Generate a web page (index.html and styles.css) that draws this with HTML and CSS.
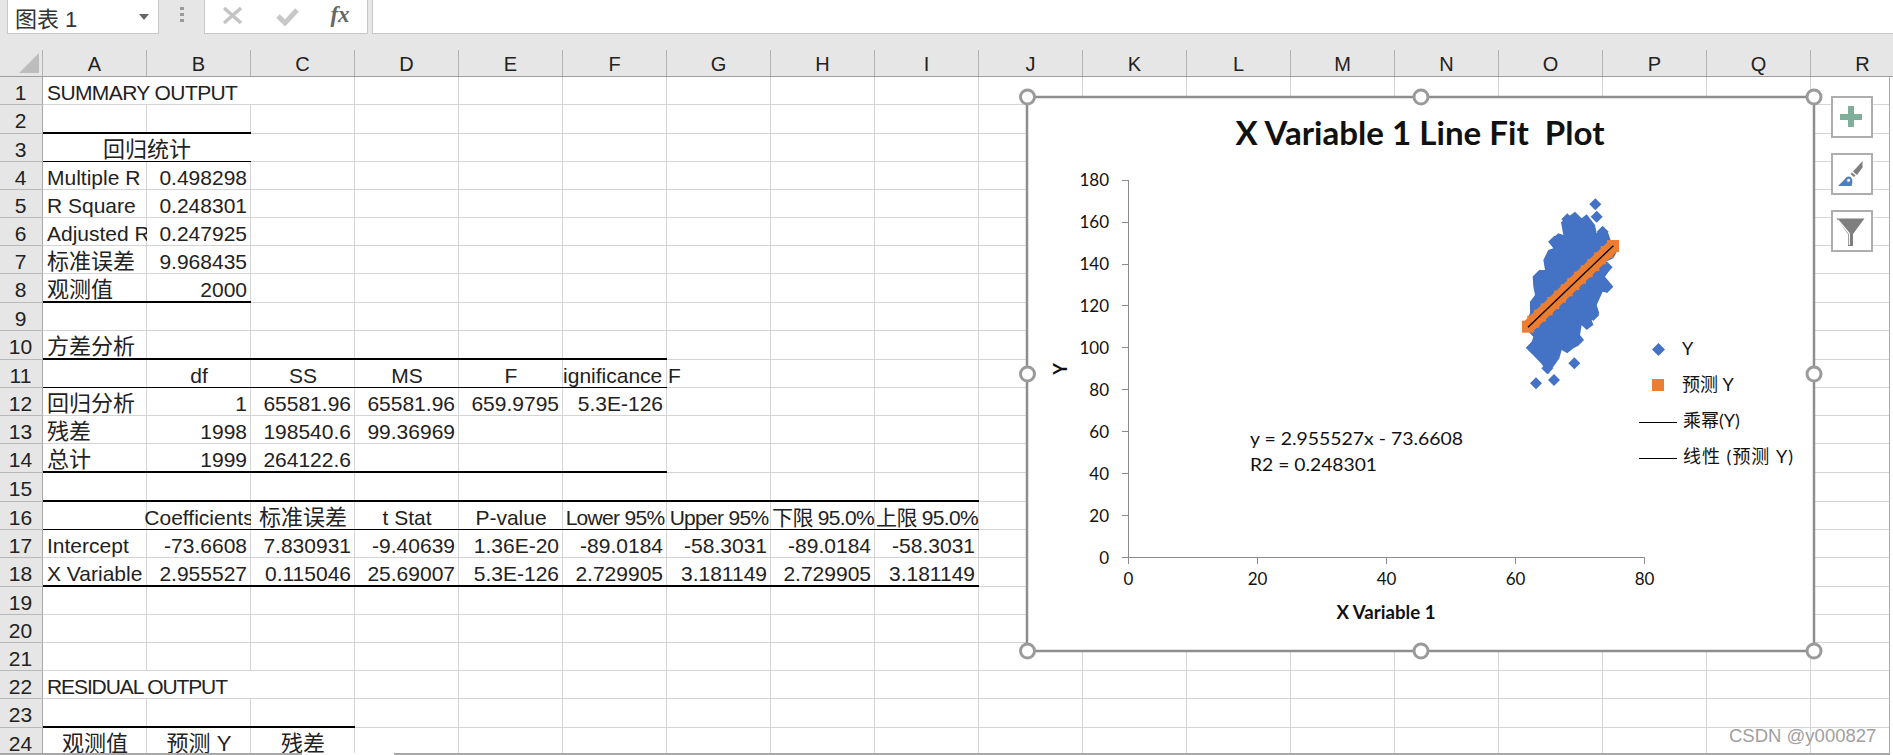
FILE: index.html

```html
<!DOCTYPE html>
<html lang="zh-CN">
<head>
  <meta charset="UTF-8" />
  <title>回归分析</title>
  <link rel="stylesheet" href="styles.css">
</head>
<body>
  <div class="toolbar">
    <div class="namebox"><span>图表 1</span><i class="caret"></i></div>
    <div class="dots"><i></i><i></i><i></i></div>
    <div class="fxbox">
      <svg class="tool" viewBox="0 0 54 30"><path d="M19 8 36 23M36 8 19 23" /></svg>
      <svg class="tool" viewBox="0 0 54 30"><path class="tick" d="M19 16 26 23 38 10" /></svg>
      <span class="fx">fx</span>
    </div>
    <div class="formula"></div>
  </div>

  <div class="colhead">
    <div class="corner"><i></i></div>
    <div>A</div><div>B</div><div>C</div><div>D</div><div>E</div><div>F</div><div>G</div><div>H</div><div>I</div>
    <div>J</div><div>K</div><div>L</div><div>M</div><div>N</div><div>O</div><div>P</div><div>Q</div><div>R</div>
  </div>

  <div class="grid">
    <div class="row"><b>1</b><div class="s2 fill caps">SUMMARY OUTPUT</div></div>
    <div class="row tall"><b>2</b><div class="s2 t"></div></div>
    <div class="row"><b>3</b><div class="s2 fill ctr u zh">回归统计</div></div>
    <div class="row"><b>4</b><div>Multiple R</div><div class="num">0.498298</div></div>
    <div class="row"><b>5</b><div>R Square</div><div class="num">0.248301</div></div>
    <div class="row"><b>6</b><div class="clip">Adjusted R</div><div class="num">0.247925</div></div>
    <div class="row"><b>7</b><div class="zh">标准误差</div><div class="num">9.968435</div></div>
    <div class="row tall"><b>8</b><div class="t zh">观测值</div><div class="num t">2000</div></div>
    <div class="row"><b>9</b></div>
    <div class="row tall"><b>10</b><div class="t zh">方差分析</div><div class="s5 t"></div></div>
    <div class="row"><b>11</b><div class="u"></div><div class="ctr u">df</div><div class="ctr u">SS</div><div class="ctr u">MS</div><div class="ctr u">F</div><div class="ctr u cut-left">Significance F</div></div>
    <div class="row"><b>12</b><div class="zh">回归分析</div><div class="num">1</div><div class="num">65581.96</div><div class="num">65581.96</div><div class="num">659.9795</div><div class="num">5.3E-126</div></div>
    <div class="row"><b>13</b><div class="zh">残差</div><div class="num">1998</div><div class="num">198540.6</div><div class="num">99.36969</div></div>
    <div class="row tall"><b>14</b><div class="t zh">总计</div><div class="num t">1999</div><div class="num t">264122.6</div><div class="s3 t"></div></div>
    <div class="row tall"><b>15</b><div class="s9 t"></div></div>
    <div class="row"><b>16</b><div class="u"></div><div class="ctr u cut-right">Coefficients</div><div class="ctr u zh">标准误差</div><div class="ctr u">t Stat</div><div class="ctr u">P-value</div><div class="ctr u pct">Lower 95%</div><div class="ctr u pct">Upper 95%</div><div class="ctr u pct">下限 95.0%</div><div class="ctr u pct">上限 95.0%</div></div>
    <div class="row"><b>17</b><div>Intercept</div><div class="num">-73.6608</div><div class="num">7.830931</div><div class="num">-9.40639</div><div class="num">1.36E-20</div><div class="num">-89.0184</div><div class="num">-58.3031</div><div class="num">-89.0184</div><div class="num">-58.3031</div></div>
    <div class="row tall"><b>18</b><div class="t clip">X Variable</div><div class="num t">2.955527</div><div class="num t">0.115046</div><div class="num t">25.69007</div><div class="num t">5.3E-126</div><div class="num t">2.729905</div><div class="num t">3.181149</div><div class="num t">2.729905</div><div class="num t">3.181149</div></div>
    <div class="row"><b>19</b></div>
    <div class="row"><b>20</b></div>
    <div class="row"><b>21</b></div>
    <div class="row"><b>22</b><div class="s2 fill caps wide">RESIDUAL OUTPUT</div></div>
    <div class="row tall"><b>23</b><div class="s3 t"></div></div>
    <div class="row last"><b>24</b><div class="ctr zh">观测值</div><div class="ctr zh">预测 Y</div><div class="ctr zh">残差</div></div>
  </div>
  <div class="sheetend"><i></i><i></i></div>

  <!-- viewBox uses page coordinates so the numbers read straight off the screenshot -->
  <svg class="chart" viewBox="1010 80 820 590">
    <defs>
      <path id="d" d="M0-18 18 0 0 18-18 0Z" />
      <path id="s" d="M-18-18H18V18H-18Z" />
      <circle id="handle" r="7" />
    </defs>
    <rect class="frame" x="1027" y="97" width="787" height="554" />

    <text class="title" x="1420" y="145" textLength="369" lengthAdjust="spacingAndGlyphs">X Variable 1 Line Fit  Plot</text>

    <path class="axis" d="M1128.5 180V557.5H1644.5M1122 180.5H1128.5M1122 222.5H1128.5M1122 264.5H1128.5M1122 305.5H1128.5M1122 347.5H1128.5M1122 389.5H1128.5M1122 431.5H1128.5M1122 473.5H1128.5M1122 515.5H1128.5M1122 557.5H1128.5M1128.5 557.5V564M1257.5 557.5V564M1386.5 557.5V564M1515.5 557.5V564M1644.5 557.5V564" />
    <g class="tick-y">
      <text x="1109" y="186">180</text>
      <text x="1109" y="228">160</text>
      <text x="1109" y="270">140</text>
      <text x="1109" y="312">120</text>
      <text x="1109" y="354">100</text>
      <text x="1109" y="396">80</text>
      <text x="1109" y="438">60</text>
      <text x="1109" y="480">40</text>
      <text x="1109" y="522">20</text>
      <text x="1109" y="564">0</text>
    </g>
    <g class="tick-x">
      <text x="1128.5" y="585">0</text>
      <text x="1257.5" y="585">20</text>
      <text x="1386.5" y="585">40</text>
      <text x="1515.5" y="585">60</text>
      <text x="1644.5" y="585">80</text>
    </g>
    <text class="axis-title" x="1386" y="619" textLength="99" lengthAdjust="spacingAndGlyphs">X Variable 1</text>
    <text class="axis-title" transform="translate(1067 369) rotate(-90)">Y</text>

    <!-- scatter, in 3x units measured off a zoomed crop -->
    <g transform="translate(1480 180) scale(.33333)">
      <g class="blue">
        <path d="M285 95 305 115 320 103 345 135 350 160 367 140 385 160 395 190 415 207 400 235 378 245 395 262 375 290 400 320 382 338 368 335 350 375 358 400 335 420 340 435 322 448 305 435 300 465 312 480 295 497 280 505 262 520 245 510 238 535 205 582 185 552 138 503 155 485 160 470 130 440 150 400 150 365 165 345 160 320 158 290 178 270 195 270 190 240 205 210 220 205 205 185 235 160 250 165 243 127Z" />
        <use href="#d" x="346" y="73" />
        <use href="#d" x="350" y="110" />
        <use href="#d" x="283" y="550" />
        <use href="#d" x="222" y="600" />
        <use href="#d" x="168" y="610" />
        <use href="#d" x="202" y="565" />
        <use href="#d" x="380" y="320" />
        <use href="#d" x="368" y="155" />
        <use href="#d" x="320" y="432" />
        <use href="#d" x="290" y="480" />
        <use href="#d" x="156" y="503" />
        <use href="#d" x="262" y="118" />
        <use href="#d" x="223" y="185" />
        <use href="#d" x="176" y="290" />
        <use href="#d" x="380" y="262" />
        <use href="#d" x="340" y="405" />
      </g>
      <g class="orange">
        <path d="M144 441 399 198" />
        <use href="#s" x="160" y="425" /><use href="#s" x="180" y="407" /><use href="#s" x="200" y="388" />
        <use href="#s" x="220" y="369" /><use href="#s" x="240" y="350" /><use href="#s" x="260" y="331" />
        <use href="#s" x="280" y="312" /><use href="#s" x="300" y="293" /><use href="#s" x="320" y="274" />
        <use href="#s" x="340" y="255" /><use href="#s" x="360" y="235" /><use href="#s" x="380" y="216" />
        <rect x="126" y="422" width="36" height="36" />
        <rect x="381" y="180" width="36" height="36" />
      </g>
      <path class="fit" d="M144 442 400 197" />
    </g>

    <text class="note" x="1250" y="445" textLength="213" lengthAdjust="spacingAndGlyphs">y = 2.955527x - 73.6608</text>
    <text class="note" x="1250" y="471" textLength="127" lengthAdjust="spacingAndGlyphs">R2 = 0.248301</text>

    <path class="key-blue" d="M1658.5 343 1665 349.5 1658.5 356 1652 349.5Z" />
    <rect class="key-orange" x="1652" y="379" width="12" height="12" />
    <path class="key-line" d="M1639 422.5H1677M1639 458.5H1677" />
    <text class="legend" x="1682" y="355">Y</text>
    <text class="legend" x="1682" y="391">预测 Y</text>
    <text class="legend" x="1683" y="427">乘幂(Y)</text>
    <text class="legend" x="1683" y="463" textLength="110" lengthAdjust="spacing">线性 (预测 Y)</text>

    <g class="handles">
      <use href="#handle" x="1027.5" y="97" />
      <use href="#handle" x="1421" y="97" />
      <use href="#handle" x="1814" y="97" />
      <use href="#handle" x="1027.5" y="374" />
      <use href="#handle" x="1814" y="374" />
      <use href="#handle" x="1027.5" y="651" />
      <use href="#handle" x="1421" y="651" />
      <use href="#handle" x="1814" y="651" />
    </g>
  </svg>

  <div class="chart-tools">
    <div class="tool-btn"><svg viewBox="2 2 38 38"><path class="plus" d="M17 10H23V18H31V24H23V31H17V24H9V18H17Z" /></svg></div>
    <div class="tool-btn"><svg viewBox="2 2 38 38">
      <path class="grey" d="M31.5 8V14.5L26 22 22 18.5Z" />
      <path class="grey" d="M19.5 21 21 19.5 24.5 22.5 23 24Z" />
      <path class="brush" d="M7 33 13.5 26.5C15 24 18 22.5 20 24.5 22 26.5 21.5 30.5 20.5 33Z" />
      <path class="swoosh" d="M15.5 27C16 25.5 18.5 25 19.5 26.5 20 28 18 30 16.5 29 15.8 28.6 15.5 27.8 15.5 27Z" />
    </svg></div>
    <div class="tool-btn"><svg viewBox="2 2 38 38">
      <path class="grey" d="M5.5 8.5H33.5L22 24V36H17V24Z" />
      <path class="funnel-edge" d="M7 10 18.3 23.5V35" />
    </svg></div>
  </div>

  <div class="watermark">CSDN @y000827</div>
</body>
</html>
```

FILE: styles.css

```css
* { box-sizing: border-box; }
html, body { margin: 0; height: 755px; overflow: hidden; }
body { position: relative; background: #fff; color: #222; font-family: "Liberation Sans", "Noto Sans CJK SC", sans-serif; font-size: 21px; }

/* formula bar */
.toolbar { display: flex; height: 50px; background: #e6e6e6; padding-left: 7px; align-items: flex-start; }
.namebox { display: flex; justify-content: space-between; align-items: center; width: 152px; height: 34px; background: #fff; border: 1px solid #c8c8c8; border-top: 0; padding: 0 9px 0 7px; font-size: 22px; color: #333; }
.caret { width: 0; height: 0; border: 5px solid transparent; border-top: 6px solid #666; border-bottom: 0; }
.dots { display: flex; flex-direction: column; gap: 3px; width: 45px; align-items: center; padding-top: 7px; }
.dots i { width: 4px; height: 3px; background: #9a9a9a; }
.fxbox { display: flex; width: 164px; height: 34px; background: #fff; border: 1px solid #c8c8c8; border-top: 0; }
.tool { width: 54px; height: 30px; fill: none; stroke: #c4c4c4; stroke-width: 3.5; }
.tool .tick { stroke: #c8c8c8; stroke-width: 5; }
.fx { width: 54px; text-align: center; font: italic bold 23px/30px "Liberation Serif", serif; color: #666; }
.formula { flex: 1; height: 34px; margin-left: 4px; background: #fff; border: 1px solid #c8c8c8; border-top: 0; border-right: 0; }

/* column letters */
.colhead { display: grid; grid-template-columns: 43px repeat(18, 104px); height: 27px; background: #e6e6e6; border-bottom: 1px solid #9e9e9e; font-size: 20px; line-height: 28px; text-align: center; color: #222; overflow: hidden; }
.colhead div { border-right: 1px solid #b4b4b4; }
.corner { position: relative; }
.corner i { position: absolute; left: 19px; top: 3px; width: 20px; height: 20px; background: #bdbdbd; clip-path: polygon(100% 0, 100% 100%, 0 100%); }

/* sheet */
.grid { width: 1890px; overflow: hidden; border-right: 1px solid #aaa; }
.row { display: grid; grid-template-columns: 43px repeat(18, 104px); grid-template-rows: minmax(0, 1fr); height: 28px; line-height: 31px; white-space: nowrap; background: linear-gradient(90deg, #d4d4d4 1px, transparent 1px) 42px 0 / 104px 100%; border-bottom: 1px solid #d4d4d4; }
.row.tall { height: 29px; }
.row.last { height: 25px; border-bottom: 0; }
.row b { font-weight: normal; text-align: center; background: #e6e6e6; border-right: 1px solid #a8a8a8; box-shadow: 0 1px 0 #b8b8b8; padding-right: 1px; }
.row div { padding: 0 4px; min-width: 0; }
.zh { font-size: 22px; }
.caps { letter-spacing: -.6px; }
.caps.wide { letter-spacing: -1.1px; }
.num { text-align: right; }
.ctr { display: flex; justify-content: center; }
.pct { letter-spacing: -.7px; }
.clip { clip-path: inset(0 0 -6px 0); }
.cut-right { clip-path: inset(0 0 -6px -60px); }
.cut-left { clip-path: inset(0 -60px -6px 0); }
.fill { background: #fff; }
.s2 { grid-column: span 2; }
.s3 { grid-column: span 3; }
.s5 { grid-column: span 5; }
.s9 { grid-column: span 9; }
.u { box-shadow: 0 1px 0 #000; }
.t { box-shadow: 0 1px 0 #000, inset 0 -1px 0 #000; }
.sheetend { display: flex; height: 2px; gap: 92px; width: 1890px; }
.sheetend i { flex: 1; border-top: 2px solid #a8a8a8; }
.sheetend i:first-child { flex: 0 0 302px; }

/* chart overlay */
.chart { position: absolute; left: 1010px; top: 80px; width: 820px; height: 590px; font-family: Lato, "Noto Sans CJK SC", sans-serif; fill: #111; }
.frame { fill: #fff; stroke: #8e8e8e; stroke-width: 2.5; }
.title { font-size: 33px; font-weight: bold; text-anchor: middle; white-space: pre; }
.axis { fill: none; stroke: #8c8c8c; stroke-width: 1; }
.tick-y text { font-size: 17px; text-anchor: end; }
.tick-x text { font-size: 17px; text-anchor: middle; }
.axis-title { font-size: 18px; font-weight: bold; text-anchor: middle; }
.blue { fill: #4472c4; }
.orange { fill: #ed7d31; }
.orange path { fill: none; stroke: #ed7d31; stroke-width: 40; }
.fit { fill: none; stroke: #000; stroke-width: 4; }
.note { font-size: 18px; }
.key-blue { fill: #4472c4; }
.key-orange { fill: #ed7d31; }
.key-line { fill: none; stroke: #000; stroke-width: 1; }
.legend { font-size: 18px; }
.handles { fill: #fff; stroke: #9a9a9a; stroke-width: 3; }

/* chart side buttons */
.chart-tools { position: absolute; left: 1831px; top: 96px; display: flex; flex-direction: column; gap: 15px; }
.tool-btn { width: 42px; height: 42px; background: #fff; border: 2px solid #aeaeae; }
.tool-btn svg { display: block; width: 38px; height: 38px; }
.plus { fill: #7fae9b; }
.grey { fill: #7f7f7f; }
.brush { fill: #4a7fc1; }
.swoosh { fill: #fff; stroke: #4a7fc1; }
.funnel-edge { fill: none; stroke: #fff; stroke-width: 1.2; }

.watermark { position: absolute; left: 1729px; top: 724px; font-size: 18.5px; line-height: 24px; color: #a0a0a0; text-shadow: 0 0 1px #fff; }
```
